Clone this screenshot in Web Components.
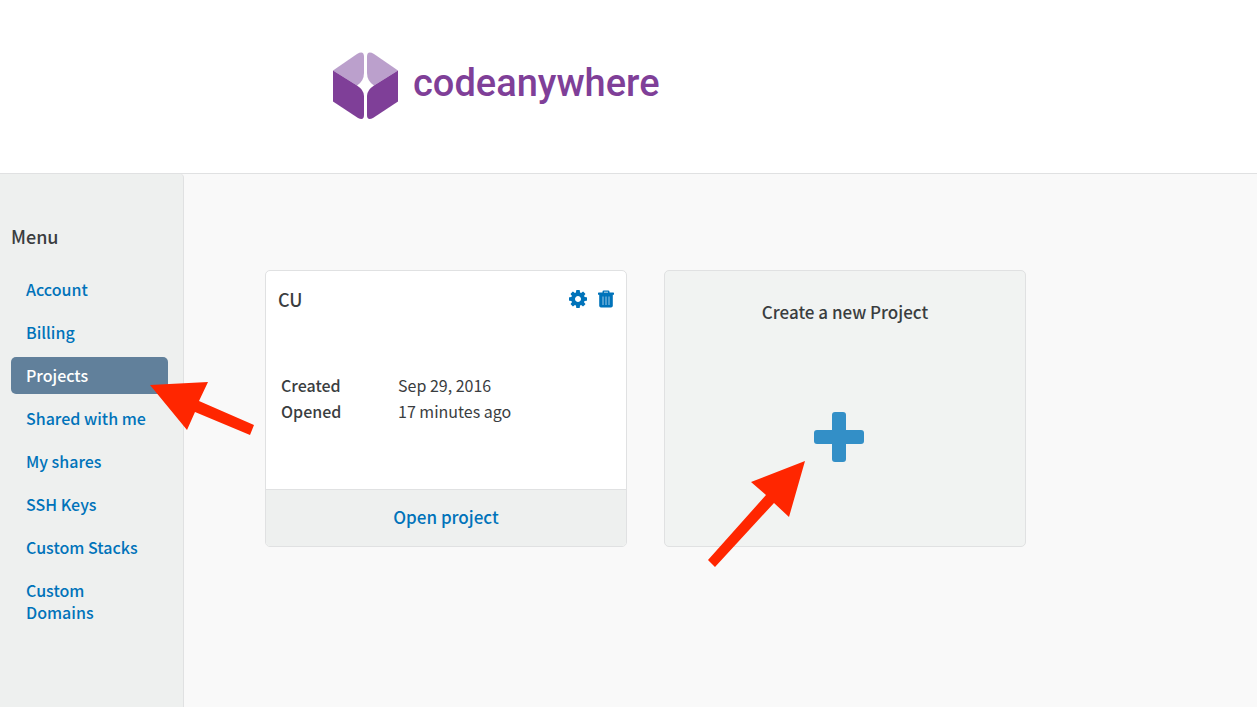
<!DOCTYPE html>
<html lang="en">
<head>
<meta charset="utf-8">
<meta name="viewport" content="width=device-width, initial-scale=1">
<title>Codeanywhere - Projects</title>
<style>
  :root {
    --ink: #3a3d3f;
    --link: #0073ba;
    --line: #e0e1e2;
    --panel: #eef0ef;
    --marker: #ff2600;
  }
  body {
    margin: 0;
    background: #f9f9f9;
    color: var(--ink);
    font: 16px/26px "Noto Sans CJK SC", "Noto Sans", sans-serif;
  }
</style>
</head>
<body>
<ca-app></ca-app>
<script>
  const define = (name, html) => {
    const template = document.createElement('template');
    template.innerHTML = html;
    customElements.define(name, class extends HTMLElement {
      constructor() {
        super();
        this.attachShadow({ mode: 'open' }).append(template.content.cloneNode(true));
      }
    });
  };

  define('ca-logo', `
    <style>
      :host { display: block; }
      a { display: flex; align-items: center; gap: 14px; color: #7f3f98; text-decoration: none; }
      svg { display: block; width: 67px; height: 68px; flex: none; }
      span { font: 500 38px/48px Roboto, sans-serif; margin-bottom: 6px; }
    </style>
    <a href="#">
      <svg viewBox="0 0 67 68" aria-hidden="true">
        <path fill="#bba0cc" d="M1 18.500 25 2Q32 -2 32 5V21Q32 29 25 33.500Z"/>
        <path fill="#bba0cc" d="M66 18.500 42 2Q35 -2 35 5V21Q35 29 42 33.500Z"/>
        <path fill="#7f3f98" d="M1 18.500 25 33.500Q32 38 32 44V63Q32 69 26 66L1 49.500Z"/>
        <path fill="#7f3f98" d="M66 18.500 42 33.500Q35 38 35 44V63Q35 69 41 66L66 49.500Z"/>
        <path fill="#fff" d="M33.500 26Q34 33 42 33.500Q34 34 33.500 41Q33 34 25 33.500Q33 33 33.500 26Z"/>
      </svg>
      <span>codeanywhere</span>
    </a>`);

  define('ca-header', `
    <style>
      :host { display: flex; align-items: center; box-sizing: border-box; min-height: 174px;
        padding: 0 24px 2px 332px; background: #fff; border-bottom: 1px solid var(--line); }
    </style>
    <slot></slot>`);

  define('ca-menu-item', `
    <style>
      :host { display: block; position: relative; }
      a { display: block; padding: 7px 15px 8px; border-radius: 5px; color: var(--link);
        font-weight: 500; line-height: 22px; text-decoration: none; }
      :host([current]) a { background: #61809b; color: #fff; }
    </style>
    <a href="#"><slot></slot></a>
    <slot name="marker"></slot>`);

  define('ca-menu', `
    <style>
      :host { display: block; box-sizing: border-box; width: 184px; flex: none; padding: 48px 15px 48px 11px;
        background: var(--panel); border-right: 1px solid var(--line); border-top-right-radius: 4px; }
      h2 { margin: 0 0 21px; font-size: 18px; line-height: 28px; font-weight: 500; }
      nav { display: flex; flex-direction: column; gap: 6px; }
    </style>
    <h2>Menu</h2>
    <nav aria-label="Menu"><slot></slot></nav>`);

  define('ca-marker-left', `
    <style>
      :host { position: absolute; left: 138px; top: 24px; z-index: 2; pointer-events: none; }
      svg { display: block; fill: var(--marker); }
    </style>
    <svg width="108" height="58" aria-hidden="true"><path d="M1 4 59 1 50 20 105 44 101 54 46 31 38 49Z"/></svg>`);

  define('ca-marker-up', `
    <style>
      :host { position: absolute; left: 43px; top: 190px; z-index: 2; pointer-events: none; }
      svg { display: block; fill: var(--marker); }
    </style>
    <svg width="100" height="110" aria-hidden="true"><path d="M98 1 44 22 59 35 1 100 8 107 67 43 82 57Z"/></svg>`);

  define('ca-project-card', `
    <style>
      :host { display: flex; flex-direction: column; box-sizing: border-box; min-height: 277px;
        background: #fff; border: 1px solid var(--line); border-radius: 5px; overflow: hidden; }
      header { display: flex; align-items: center; padding: 14px 11px 0 12px; }
      h3 { flex: 1; margin: 0; font-size: 18px; line-height: 28px; font-weight: 500; }
      button { display: block; padding: 0; border: 0; background: none; color: var(--link); cursor: pointer; }
      .tools { display: flex; gap: 10px; }
      svg { display: block; width: 18px; height: 18px; fill: currentColor; }
      table { margin: 59px 15px 0; border-collapse: collapse; line-height: 26px; text-align: left; }
      th { width: 117px; padding: 0; font-weight: 500; }
      td { padding: 0; }
      footer { margin-top: auto; background: var(--panel); border-top: 1px solid var(--line); }
      footer a { display: block; padding: 13px 14px 15px; color: var(--link); font-size: 17px; line-height: 28px;
        font-weight: 500; text-align: center; text-decoration: none; }
    </style>
    <header>
      <h3><slot name="name"></slot></h3>
      <div class="tools">
        <button type="button" aria-label="Project settings">
          <svg viewBox="128 128 1536 1536"><path d="M1152 896q0-106-75-181t-181-75-181 75-75 181 75 181 181 75 181-75 75-181zm512-109v222q0 12-8 23t-20 13l-185 28q-19 54-39 91 35 50 107 138 10 12 10 25t-9 23q-27 37-99 108t-94 71q-12 0-26-9l-138-108q-44 23-91 38-16 136-29 186-7 28-36 28h-222q-14 0-24.500-8.500t-11.500-21.500l-28-184q-49-16-90-37l-141 107q-10 9-25 9-14 0-25-11-126-114-165-168-7-10-7-23 0-12 8-23 15-21 51-66.500t54-70.500q-27-50-41-99l-183-27q-13-2-21-12.500t-8-23.500v-222q0-12 8-23t19-13l186-28q14-46 39-92-40-57-107-138-10-12-10-24 0-10 9-23 26-36 98.500-107.500t94.500-71.500q13 0 26 10l138 107q44-23 91-38 16-136 29-186 7-28 36-28h222q14 0 24.500 8.500t11.500 21.500l28 184q49 16 90 37l142-107q9-9 24-9 13 0 25 10 129 119 165 170 7 8 7 22 0 12-8 23-15 21-51 66.500t-54 70.500q26 50 41 98l183 28q13 2 21 12.500t8 23.500z"/></svg>
        </button>
        <button type="button" aria-label="Delete project">
          <svg viewBox="0 0 18 18">
            <path fill-rule="evenodd" d="M5.500 2.500V1.800Q5.500.5 6.800.5H11.200Q12.500.5 12.500 1.800V2.500H16.300Q17 2.500 17 3.200V4.800H15.800V15.800Q15.800 17.500 14 17.500H4Q2.200 17.500 2.200 15.800V4.800H1V3.200Q1 2.500 1.700 2.500ZM7 2.500H11V1.800H7Z"/>
            <path d="M6 6.500V15M9 6.500V15M12 6.500V15" stroke="#9dcae6" stroke-width="1" fill="none"/>
          </svg>
        </button>
      </div>
    </header>
    <table>
      <tr><th scope="row">Created</th><td><slot name="created"></slot></td></tr>
      <tr><th scope="row">Opened</th><td><slot name="opened"></slot></td></tr>
    </table>
    <footer><a href="#">Open project</a></footer>`);

  define('ca-new-card', `
    <style>
      :host { display: flex; position: relative; min-height: 277px; }
      button { display: flex; flex-direction: column; align-items: center; flex: 1; box-sizing: border-box;
        padding: 27px 12px; background: #f1f3f2; border: 1px solid var(--line); border-radius: 5px;
        color: inherit; font: 500 17px/28px "Noto Sans CJK SC", "Noto Sans", sans-serif; cursor: pointer; }
      svg { display: block; width: 50px; height: 50px; margin: 86px 12px 0 0; fill: #338fc7; }
    </style>
    <button type="button">
      <slot></slot>
      <svg viewBox="0 0 50 50" aria-hidden="true"><rect x="18" width="14" height="50" rx="3"/><rect y="18" width="50" height="14" rx="3"/></svg>
    </button>
    <slot name="marker"></slot>`);

  define('ca-app', `
    <style>
      :host { display: flex; flex-direction: column; min-height: 100vh; }
      .body { display: flex; flex: 1; }
      main { flex: 1; min-width: 0; display: grid; align-content: start; gap: 37px;
        grid-template-columns: repeat(auto-fit, minmax(0, 362px)); padding: 96px 24px 48px 81px; }
    </style>
    <ca-header><ca-logo></ca-logo></ca-header>
    <div class="body">
      <ca-menu>
        <ca-menu-item>Account</ca-menu-item>
        <ca-menu-item>Billing</ca-menu-item>
        <ca-menu-item current>Projects<ca-marker-left slot="marker"></ca-marker-left></ca-menu-item>
        <ca-menu-item>Shared with me</ca-menu-item>
        <ca-menu-item>My shares</ca-menu-item>
        <ca-menu-item>SSH Keys</ca-menu-item>
        <ca-menu-item>Custom Stacks</ca-menu-item>
        <ca-menu-item>Custom Domains</ca-menu-item>
      </ca-menu>
      <main>
        <ca-project-card>
          <span slot="name">CU</span>
          <span slot="created">Sep 29, 2016</span>
          <span slot="opened">17 minutes ago</span>
        </ca-project-card>
        <ca-new-card>Create a new Project<ca-marker-up slot="marker"></ca-marker-up></ca-new-card>
      </main>
    </div>`);
</script>
</body>
</html>
